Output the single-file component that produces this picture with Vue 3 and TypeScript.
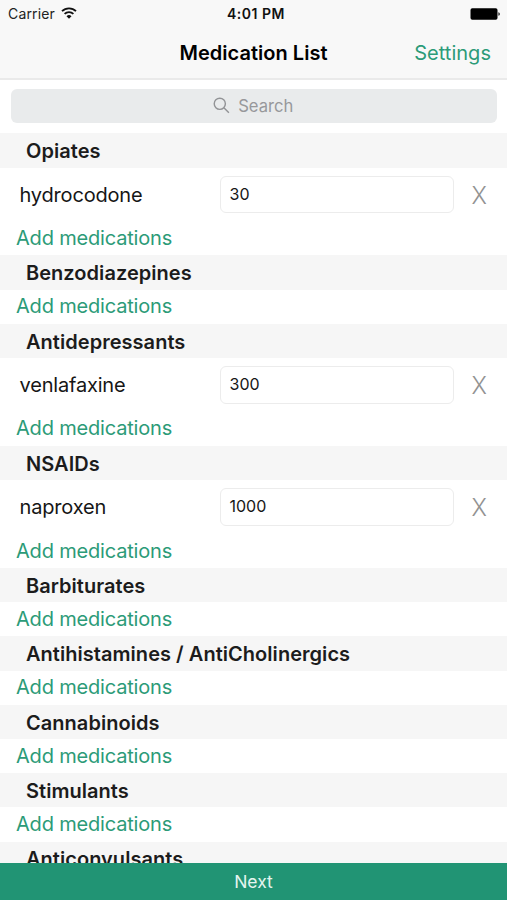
<script setup lang="ts">
interface Medication { name: string; dose: string }
interface Group { title: string; items: Medication[] }
const groups: Group[] = [
  { title: 'Opiates', items: [{ name: 'hydrocodone', dose: '30' }] },
  { title: 'Benzodiazepines', items: [] },
  { title: 'Antidepressants', items: [{ name: 'venlafaxine', dose: '300' }] },
  { title: 'NSAIDs', items: [{ name: 'naproxen', dose: '1000' }] },
  { title: 'Barbiturates', items: [] },
  { title: 'Antihistamines / AntiCholinergics', items: [] },
  { title: 'Cannabinoids', items: [] },
  { title: 'Stimulants', items: [] },
  { title: 'Anticonvulsants', items: [] },
]
</script>

<template>
  <div class="screen">
    <header class="top">
      <div class="status">
        <div class="carrier">
          <span>Carrier</span>
          <svg class="wifi" viewBox="0 0 16 12">
            <path d="M1 4.200a9.900 9.900 0 0 1 14 0M3.600 6.900a6.200 6.200 0 0 1 8.800 0" fill="none" stroke="#111" stroke-width="1.800" />
            <path d="M8 11.800 5.500 9.200a3.600 3.600 0 0 1 5 0z" fill="#111" />
          </svg>
        </div>
        <span class="time">4:01 PM</span>
        <svg class="battery" viewBox="0 0 31 12">
          <rect x=".5" y=".3" width="27" height="11.400" rx="1.800" fill="#000" />
          <path d="M28.400 4.200c1.900.4 1.900 3.200 0 3.600z" fill="#222" />
        </svg>
      </div>
      <div class="nav">
        <span></span>
        <h1>Medication List</h1>
        <a class="settings">Settings</a>
      </div>
    </header>
    <div class="search-wrap">
      <div class="search">
        <svg viewBox="0 0 18 18"><circle cx="7.200" cy="7.200" r="5.900" /><path d="m11.500 11.500 5.300 5.300" /></svg>
        <span>Search</span>
      </div>
    </div>
    <main class="list">
      <section v-for="g in groups" :key="g.title">
        <h2>{{ g.title }}</h2>
        <div v-for="m in g.items" :key="m.name" class="row">
          <span class="name">{{ m.name }}</span>
          <div class="dose">{{ m.dose }}</div>
          <span class="remove">X</span>
        </div>
        <div class="add">Add medications</div>
      </section>
    </main>
    <footer class="next">Next</footer>
  </div>
</template>

<style>
body { margin: 0; overflow: hidden; }
</style>
<style scoped>
.screen { width: 507px; height: 900px; display: flex; flex-direction: column; overflow: hidden; background: #fff; color: #1c1c1c; font-family: Inter, "Liberation Sans", sans-serif; }
.top { height: 80px; flex: none; box-sizing: border-box; background: #f8f8f8; border-bottom: 2px solid #eaeaea; }
.status { height: 27px; display: grid; grid-template-columns: 1fr auto 1fr; align-items: center; padding: 0 5px 0 8px; font-size: 14px; color: #222; }
.carrier { display: flex; align-items: center; gap: 6.500px; letter-spacing: .15px; }
.wifi { width: 16px; height: 12px; position: relative; top: -1px; }
.time { font-weight: 600; font-size: 14px; letter-spacing: .5px; color: #111; padding-left: 2px; }
.battery { width: 31px; height: 12px; justify-self: end; margin-right: 1px; }
.nav { height: 51px; display: grid; grid-template-columns: 1fr auto 1fr; align-items: center; padding: 0 16px; }
h1 { margin: 0; font-size: 20px; font-weight: 600; color: #000; letter-spacing: .03px; }
.settings { justify-self: end; color: #2c9b78; font-size: 20px; letter-spacing: .03px; }
.search-wrap { height: 53.400px; flex: none; box-sizing: border-box; padding: 8.500px 10px 0 11px; }
.search { height: 34.500px; display: flex; align-items: center; justify-content: center; gap: 8.500px; padding-right: 2px; box-sizing: border-box; border-radius: 6px; background: #e9ebec; color: #97989b; font-size: 16.600px; }
.search svg { width: 17px; height: 17px; fill: none; stroke: #929396; stroke-width: 1.500; }
.list { flex: 1; min-height: 0; overflow: hidden; }
h2 { margin: 0; height: 34.300px; box-sizing: border-box; padding: .8px 0 0 26px; background: #f6f6f6; font-size: 20px; font-weight: 600; line-height: 35px; letter-spacing: .04px; }
.row { height: 53.700px; display: grid; grid-template-columns: 200.500px 234px 1fr; align-items: center; padding-left: 19.500px; color: #161616; font-size: 20px; }
.name { letter-spacing: -.18px; }
.dose { height: 37.500px; box-sizing: border-box; border: 1.500px solid #ececec; border-radius: 6px; padding-left: 8.500px; line-height: 35px; font-size: 16px; }
.remove { justify-self: center; color: #929292; font-size: 24.500px; font-weight: 300; transform: scaleX(.95); padding-right: 2px; }
.add { height: 34.100px; box-sizing: border-box; padding: .6px 0 0 16px; color: #2c9b78; font-size: 20px; line-height: 33.500px; letter-spacing: -.18px; }
.next { height: 37px; flex: none; background: #219474; color: #e5f4ef; text-align: center; line-height: 37px; font-size: 17.500px; }
</style>
